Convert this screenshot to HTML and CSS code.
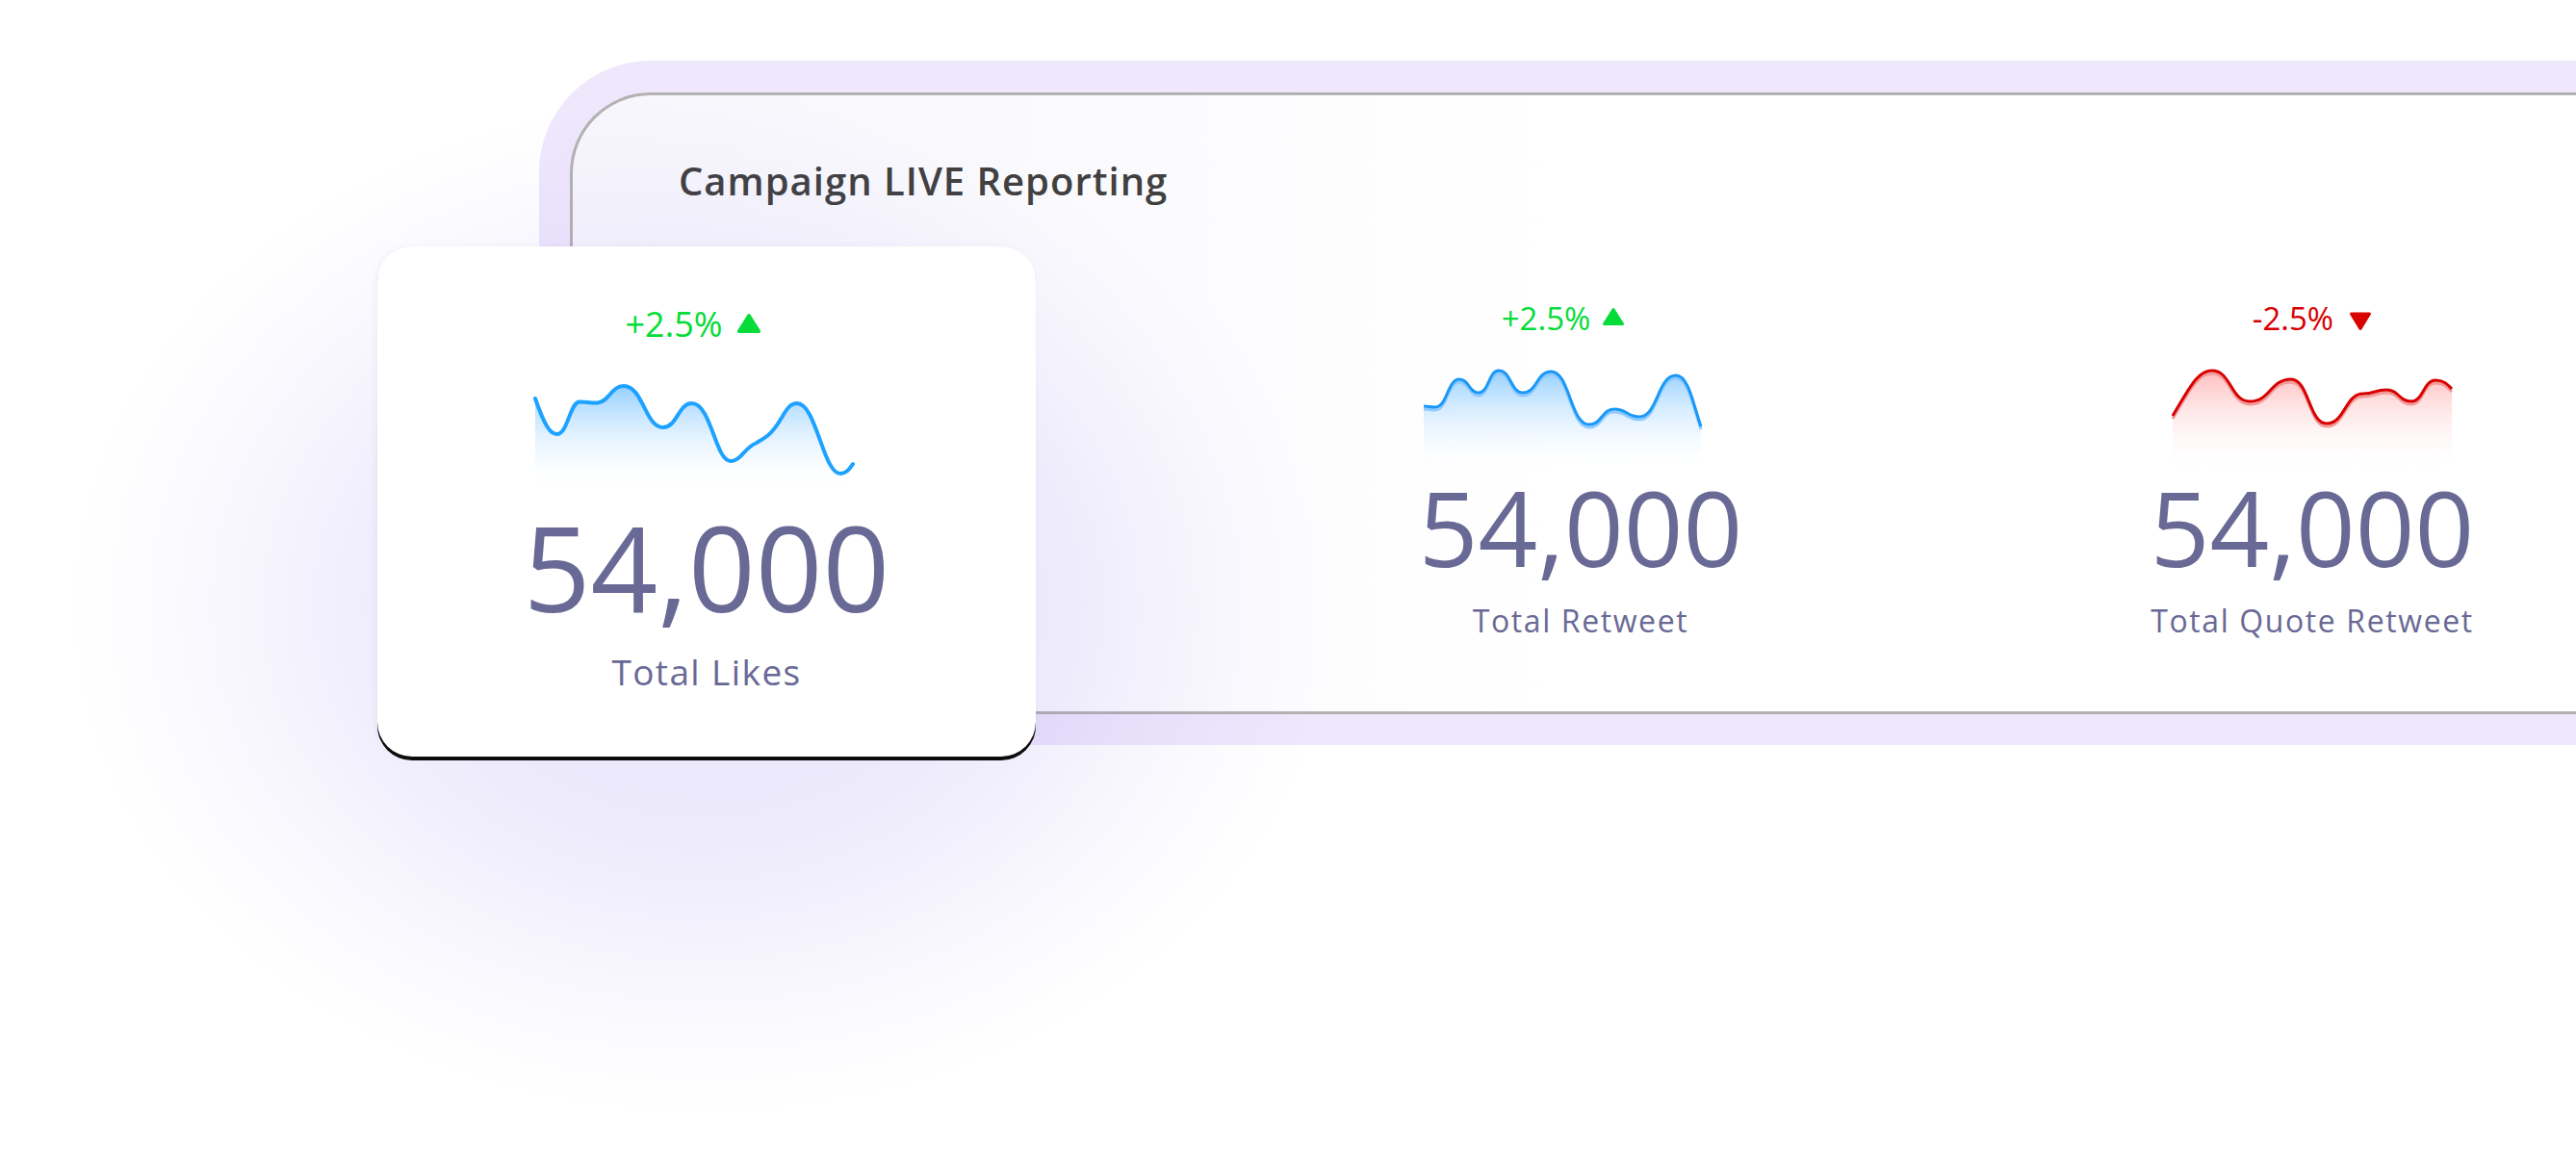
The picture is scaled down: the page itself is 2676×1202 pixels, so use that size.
FILE: index.html
```html
<!DOCTYPE html>
<html lang="en">
<head>
<meta charset="utf-8">
<title>Campaign LIVE Reporting</title>
<link rel="stylesheet" href="styles.css">
</head>
<body>
<main class="stage">
  <section class="frame">
    <div class="panel">
      <h1 class="title">Campaign LIVE Reporting</h1>
      <div class="stats">
        <div class="stat stat--placeholder"></div>

        <div class="stat stat--shift">
          <div class="delta delta--up">
            <span>+2.5%</span>
            <svg class="tri" viewBox="0 0 24 20" aria-hidden="true"><path d="M12 2.5 L21.5 17.5 H2.5 Z" fill="currentColor" stroke="currentColor" stroke-width="3" stroke-linejoin="round"/></svg>
          </div>
          <svg class="spark" viewBox="0 0 290 110" aria-hidden="true">
            <defs>
              <linearGradient id="gBlue2" x1="0" y1="0" x2="0" y2="1">
                <stop offset="0" stop-color="#8fcdff" stop-opacity="0.95"/>
                <stop offset="1" stop-color="#ffffff" stop-opacity="0"/>
              </linearGradient>
            </defs>
            <path d="M0,42 C6,42 6,43 12,43 C24.5,43 24.5,14 37,14 C47,14 47,28 57,28 C67.5,28 67.5,5 78,5 C90.5,5 90.5,28 103,28 C117.5,28 117.5,6 132,6 C152,6 152,61 172,61 C185,61 185,45 198,45 C211,45 211,53 224,53 C243,53 243,10 262,10 C275,10 280,40 288,63 L288,110 L0,110 Z" fill="url(#gBlue2)"/>
            <path d="M0,45 C6,45 6,46 12,46 C24.5,46 24.5,17 37,17 C47,17 47,31 57,31 C67.5,31 67.5,8 78,8 C90.5,8 90.5,31 103,31 C117.5,31 117.5,9 132,9 C152,9 152,64 172,64 C185,64 185,48 198,48 C211,48 211,56 224,56 C243,56 243,13 262,13 C275,13 280,43 288,66" fill="none" stroke="#8fcaff" stroke-width="3"/>
            <path d="M0,42 C6,42 6,43 12,43 C24.5,43 24.5,14 37,14 C47,14 47,28 57,28 C67.5,28 67.5,5 78,5 C90.5,5 90.5,28 103,28 C117.5,28 117.5,6 132,6 C152,6 152,61 172,61 C185,61 185,45 198,45 C211,45 211,53 224,53 C243,53 243,10 262,10 C275,10 280,40 288,63" fill="none" stroke="#1a98f7" stroke-width="3"/>
          </svg>
          <div class="value">54,000</div>
          <div class="label">Total Retweet</div>
        </div>

        <div class="stat">
          <div class="delta delta--down">
            <span>-2.5%</span>
            <svg class="tri tri--down" viewBox="0 0 24 21" aria-hidden="true"><path d="M2.5 3 H21.5 L12 18.5 Z" fill="currentColor" stroke="currentColor" stroke-width="3" stroke-linejoin="round"/></svg>
          </div>
          <svg class="spark" viewBox="0 0 290 110" aria-hidden="true">
            <defs>
              <linearGradient id="gRed" x1="0" y1="0" x2="0" y2="1">
                <stop offset="0" stop-color="#ffb9b9" stop-opacity="0.95"/>
                <stop offset="1" stop-color="#ffffff" stop-opacity="0"/>
              </linearGradient>
            </defs>
            <path d="M0,52 C18,22 26,5 41,5 C60.5,5 60.5,37 80,37 C101.5,37 101.5,14 123,14 C141.5,14 141.5,60 160,60 C179,60 179,29 198,29 C210,29 210,25 222,25 C235,25 235,37 248,37 C260.5,37 260.5,15 273,15 C282,15 286,20 290,24 L290,110 L0,110 Z" fill="url(#gRed)"/>
            <path d="M0,55 C18,25 26,8 41,8 C60.5,8 60.5,40 80,40 C101.5,40 101.5,17 123,17 C141.5,17 141.5,63 160,63 C179,63 179,32 198,32 C210,32 210,28 222,28 C235,28 235,40 248,40 C260.5,40 260.5,18 273,18 C282,18 286,23 290,27" fill="none" stroke="#f29a9a" stroke-width="3"/>
            <path d="M0,52 C18,22 26,5 41,5 C60.5,5 60.5,37 80,37 C101.5,37 101.5,14 123,14 C141.5,14 141.5,60 160,60 C179,60 179,29 198,29 C210,29 210,25 222,25 C235,25 235,37 248,37 C260.5,37 260.5,15 273,15 C282,15 286,20 290,24" fill="none" stroke="#d80000" stroke-width="3"/>
          </svg>
          <div class="value">54,000</div>
          <div class="label">Total Quote Retweet</div>
        </div>
      </div>
    </div>
  </section>

  <div class="glow" aria-hidden="true"></div>

  <article class="card stat stat--large">
    <div class="delta delta--up">
      <span>+2.5%</span>
      <svg class="tri" viewBox="0 0 24 20" aria-hidden="true"><path d="M12 2.5 L21.5 17.5 H2.5 Z" fill="currentColor" stroke="currentColor" stroke-width="3" stroke-linejoin="round"/></svg>
    </div>
    <svg class="spark" viewBox="0 0 332 115" aria-hidden="true">
      <defs>
        <linearGradient id="gBlue1" x1="0" y1="0" x2="0" y2="1">
          <stop offset="0" stop-color="#8fcdff" stop-opacity="0.95"/>
          <stop offset="1" stop-color="#ffffff" stop-opacity="0"/>
        </linearGradient>
      </defs>
      <path d="M1,19 C10,45 16,56 23.5,56 C35,56 37,22.5 47,22.5 C58,22.5 58,24 66,23.5 C78,22 80,6 93,6 C113,6 115,49 134,49 C148,49 150,24 163.5,24 C184,24 188,84 204,84 C215,84 218,70 231,65 C236,62 238,61 242.5,57.5 C258,45 260,24 273,24 C293,24 300,97 318,97 C325,97 328,91 331,87 L331,115 L1,115 Z" fill="url(#gBlue1)"/>
      <path d="M1,19 C10,45 16,56 23.5,56 C35,56 37,22.5 47,22.5 C58,22.5 58,24 66,23.5 C78,22 80,6 93,6 C113,6 115,49 134,49 C148,49 150,24 163.5,24 C184,24 188,84 204,84 C215,84 218,70 231,65 C236,62 238,61 242.5,57.5 C258,45 260,24 273,24 C293,24 300,97 318,97 C325,97 328,91 331,87" fill="none" stroke="#1ea2ff" stroke-width="4" stroke-linecap="round"/>
    </svg>
    <div class="value">54,000</div>
    <div class="label">Total Likes</div>
  </article>
</main>
</body>
</html>
```

FILE: styles.css
```css
html, body {
  margin: 0;
  padding: 0;
  background: #ffffff;
}

body {
  font-family: "Open Sans", "Noto Sans", sans-serif;
  overflow: hidden;
}

.stage {
  position: relative;
  width: 2676px;
  height: 1202px;
  box-sizing: border-box;
  padding-top: 63px;
  overflow: hidden;
}

.frame {
  margin-left: 560px;
  width: 2300px;
  height: 711px;
  box-sizing: border-box;
  padding: 33px 0 32px 32px;
  background: #efe7fc;
  border-radius: 116px 0 0 116px;
}

.panel {
  height: 100%;
  box-sizing: border-box;
  border: 3px solid #b2b2b2;
  border-right: none;
  border-radius: 84px 0 0 84px;
  background: linear-gradient(90deg, #f7f6fc 0%, #fbfbfe 25%, #ffffff 45%);
  padding: 69px 0 0 110px;
}

.title {
  margin: 0;
  font-size: 40px;
  line-height: 1;
  font-weight: 600;
  letter-spacing: 1px;
  color: #404040;
}

.stats {
  display: grid;
  grid-template-columns: repeat(3, 400px);
  column-gap: 360px;
  margin: 106px 0 0 -23px;
}

.stat {
  display: flex;
  flex-direction: column;
  align-items: center;
  color: #696996;
}

.delta {
  display: flex;
  align-items: flex-start;
  gap: 12px;
  height: 33px;
  font-size: 33px;
  line-height: 1;
}

.delta--up {
  color: #05dc39;
}

.delta--down {
  color: #d80000;
  gap: 16px;
}

.tri {
  display: block;
  width: 24px;
  height: 20px;
  margin-top: 5px;
}

.tri--down {
  height: 21px;
  margin-top: 9px;
}

.spark {
  display: block;
  width: 290px;
  height: 110px;
  margin-top: 33px;
  overflow: visible;
}

.value {
  margin-top: 4px;
  font-size: 108px;
  line-height: 1;
  white-space: nowrap;
}

.label {
  margin-top: 27px;
  font-size: 32px;
  line-height: 1;
  letter-spacing: 1.6px;
  white-space: nowrap;
}

.stat--shift .delta,
.stat--shift .spark {
  margin-right: 36px;
}

.glow {
  position: absolute;
  left: 70px;
  top: 100px;
  width: 1320px;
  height: 1060px;
  background: radial-gradient(closest-side,
    rgba(108, 88, 230, 0.15) 0%,
    rgba(108, 88, 230, 0.13) 40%,
    rgba(108, 88, 230, 0.095) 58%,
    rgba(108, 88, 230, 0.055) 72%,
    rgba(108, 88, 230, 0.022) 86%,
    rgba(108, 88, 230, 0) 100%);
  pointer-events: none;
}

.card {
  position: absolute;
  left: 392px;
  top: 256px;
  width: 684px;
  height: 530px;
  box-sizing: border-box;
  padding-top: 63px;
  background: #ffffff;
  border-radius: 36px;
  box-shadow: 0 4px 0 #0c0c0c, -2px 0 6px rgba(80, 80, 120, 0.06);
}

.card .delta {
  height: 36px;
  font-size: 36px;
  gap: 14px;
  margin-right: 26px;
}

.card .tri {
  width: 28px;
  height: 22px;
  margin-top: 6px;
}

.card .spark {
  width: 332px;
  height: 115px;
  margin-top: 40px;
  margin-right: 26px;
}

.card .value {
  margin-top: 18px;
  font-size: 122px;
}

.card .label {
  margin-top: 29px;
  font-size: 37px;
  letter-spacing: 1.4px;
}
```
